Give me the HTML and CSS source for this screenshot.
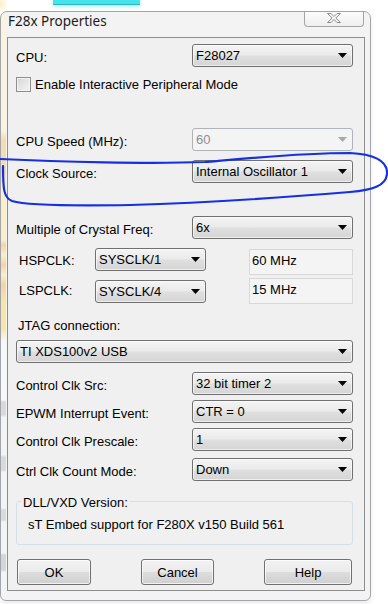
FILE: index.html
```html
<!DOCTYPE html>
<html>
<head>
<meta charset="utf-8">
<title>F28x Properties</title>
<link rel="stylesheet" href="styles.css">
</head>
<body>
<div class="backdrop"><div class="chip"></div></div>
<div class="window">
  <div class="titlebar">
    <span class="title">F28x Properties</span>
    <div class="close">
      <svg width="16" height="12" viewBox="0 0 16 12"><path d="M1.5 1.5h3.5l3 3 3-3h3.5l-4.7 4.5 4.7 4.5h-3.5l-3-3-3 3h-3.5l4.7-4.5z" fill="#f6f6f6" stroke="#8c8c8c" stroke-width="1" stroke-linejoin="round"/></svg>
    </div>
  </div>
  <div class="client">
    <div class="row m6"><span class="lbl">CPU:</span><div class="combo"><span>F28027</span></div></div>
    <div class="check-row m10"><span class="check"></span><span>Enable Interactive Peripheral Mode</span></div>
    <div class="row m36"><span class="lbl">CPU Speed (MHz):</span><div class="combo disabled"><span>60</span></div></div>
    <div class="row m9"><span class="lbl">Clock Source:</span><div class="combo"><span>Internal Oscillator 1</span></div></div>
    <div class="row m33"><span class="lbl">Multiple of Crystal Freq:</span><div class="combo"><span>6x</span></div></div>
    <div class="clk-row m9">
      <span class="lbl clk-lbl">HSPCLK:</span>
      <div class="combo small"><span>SYSCLK/1</span></div>
      <div class="readout">60 MHz</div>
    </div>
    <div class="clk-row m3">
      <span class="lbl clk-lbl">LSPCLK:</span>
      <div class="combo small lower"><span>SYSCLK/4</span></div>
      <div class="readout">15 MHz</div>
    </div>
    <div class="caption m13">JTAG connection:</div>
    <div class="row m7"><div class="combo wide"><span>TI XDS100v2 USB</span></div></div>
    <div class="row m9"><span class="lbl">Control Clk Src:</span><div class="combo"><span>32 bit timer 2</span></div></div>
    <div class="row m5"><span class="lbl">EPWM Interrupt Event:</span><div class="combo"><span>CTR = 0</span></div></div>
    <div class="row m5"><span class="lbl">Control Clk Prescale:</span><div class="combo"><span>1</span></div></div>
    <div class="row m7"><span class="lbl">Ctrl Clk Count Mode:</span><div class="combo"><span>Down</span></div></div>
    <fieldset class="group m11">
      <legend>DLL/VXD Version:</legend>
      <p class="version">sT Embed support for F280X v150 Build 561</p>
    </fieldset>
    <div class="buttons m14">
      <button class="btn ok">OK</button>
      <button class="btn cancel">Cancel</button>
      <button class="btn help">Help</button>
    </div>
  </div>
</div>
<svg class="scribble" width="388" height="604" viewBox="0 0 388 604">
  <path d="M0 159 C60 162 150 164 205 162 C250 158 300 153 350 153 C372 154 388 160 387 174 C386 186 372 190 350 192 C290 197 200 203 130 205 C70 206 25 205 12 201 C4 198 3 190 3 166" fill="none" stroke="#1530e0" stroke-width="2.2" stroke-linecap="round"/>
</svg>
</body>
</html>
```
FILE: styles.css
```css
* { box-sizing: border-box; }
html, body { margin: 0; padding: 0; }
body {
  width: 388px;
  height: 604px;
  overflow: hidden;
  background: #ffffff;
  font-family: "Liberation Sans", Arial, sans-serif;
  font-size: 13px;
  line-height: 15px;
  color: #000;
}
.backdrop {
  height: 11px;
  padding-left: 53px;
  background: radial-gradient(circle at 0 4px, #f8efc4 0, rgba(255, 255, 255, 0) 9px);
}
.chip {
  width: 87px;
  height: 5px;
  background: #47e2ea;
  border-bottom: 1px solid #2ab7c4;
  box-shadow: 0 1px 4px rgba(70, 220, 230, 0.6);
}
.window {
  width: 371px;
  height: 590px;
  border: 1px solid #a2a6aa;
  border-radius: 7px 7px 6px 6px;
  background-color: #f3f3f3;
  background-image: linear-gradient(to bottom,
    #fbf4dc 0, #fbf4dc 118px, #f6dcb0 128px, #f6dcb0 160px, #fbefc8 172px,
    #fbefc8 228px, #f5d2a5 233px, #fbefc8 243px, #f5d2a5 253px, #fbefc8 263px,
    #f5d2a5 273px, #f8e6a6 290px, #f8e6a6 316px, #f8f8f8 330px,
    #f8f8f8 388px, #d9d9d9 390px, #d9d9d9 403px, #f4f4f4 405px,
    #f4f4f4 443px, #d9d9d9 445px, #d9d9d9 458px, #f4f4f4 460px,
    #f4f4f4 496px, #dadada 498px, #dadada 508px, #f4f4f4 510px,
    #f4f4f4 541px, #d6d6d6 543px, #d6d6d6 558px, #f4f4f4 560px);
  background-size: 5px 100%;
  background-repeat: no-repeat;
  padding-bottom: 9px;
  box-shadow: 0 3px 5px rgba(0, 0, 0, 0.08);
}
.titlebar {
  height: 25px;
  display: flex;
  justify-content: space-between;
  align-items: flex-start;
  padding: 0 6px 0 7px;
}
.title {
  font-family: "Noto Sans", sans-serif;
  font-size: 13.5px;
  line-height: 18px;
  color: #1c1c1c;
}
.close {
  width: 60px;
  height: 15px;
  border: 1px solid #a5a5a5;
  border-top: none;
  border-radius: 0 0 4px 4px;
  background: linear-gradient(#fbfbfb, #efefef);
  display: flex;
  justify-content: center;
  align-items: flex-start;
}
.client {
  height: 554px;
  margin: 0 5px 0 6px;
  border: 1px solid #8d8d8d;
  background: #f0f0f0;
  padding: 0 11px 0 8px;
  display: flex;
  flex-direction: column;
}
.m3 { margin-top: 3px; }
.m5 { margin-top: 5px; }
.m6 { margin-top: 6px; }
.m7 { margin-top: 7px; }
.m9 { margin-top: 9px; }
.m10 { margin-top: 10px; }
.m11 { margin-top: 11px; }
.m13 { margin-top: 13px; }
.m14 { margin-top: 14px; }
.m33 { margin-top: 33px; }
.m36 { margin-top: 36px; }

.row { display: flex; align-items: center; height: 23px; }
.lbl { flex: 1; padding-top: 3px; white-space: nowrap; }

.combo {
  width: 161px;
  height: 23px;
  margin-left: auto;
  border: 1px solid #707070;
  border-radius: 3px;
  background: linear-gradient(#f4f4f4, #eaeaea 48%, #dfdfdf 52%, #d5d5d5);
  box-shadow: inset 0 0 0 1px rgba(255, 255, 255, 0.6);
  display: flex;
  align-items: center;
  justify-content: space-between;
  padding: 0 5px 0 3px;
  white-space: nowrap;
}
.combo::after {
  content: "";
  width: 9px;
  height: 5px;
  background: #000;
  clip-path: polygon(0 0, 100% 0, 50% 100%);
}
.combo.disabled {
  border-color: #b0b4b8;
  background: #f4f4f4;
  box-shadow: none;
  color: #8e8e8e;
}
.combo.disabled::after { background: #a8a8a8; }
.combo.wide { width: 337px; }
.combo.small { width: 111px; margin-left: 0; }
.combo.lower { margin-top: 2px; }

.check-row { display: flex; align-items: center; height: 15px; gap: 4px; }
.check {
  width: 15px;
  height: 15px;
  border: 1px solid #8e8f8f;
  background: linear-gradient(135deg, #d6d6d6, #f6f6f6);
  box-shadow: inset 0 0 0 1px #f4f4f4;
}

.clk-row { display: flex; align-items: flex-start; height: 27px; }
.clk-lbl { flex: none; width: 79px; padding-left: 3px; padding-top: 5px; }
.readout {
  width: 104px;
  height: 26px;
  margin-left: auto;
  margin-top: 1px;
  border: 1px solid #d8d8d8;
  background: #f4f4f4;
  padding: 3px 0 0 2px;
}
.clk-row.m3 .readout { margin-top: 0; }

.caption { height: 15px; padding-left: 2px; }

.group {
  margin-left: 0;
  margin-right: 0;
  min-width: 0;
  height: 53px;
  border: 1px solid #d5dfe5;
  border-radius: 3px;
  padding: 0 0 0 5px;
}
.group legend {
  padding: 4px 1px 0 1px;
  margin: 0;
  line-height: 14px;
}
.version { margin: 7px 0 0 0; padding-left: 6px; }

.buttons {
  display: flex;
  justify-content: space-between;
  padding: 0 1px 0 1px;
}
.btn {
  height: 26px;
  border: 1px solid #707070;
  border-radius: 3px;
  background: linear-gradient(#f2f2f2, #ebebeb 48%, #dddddd 52%, #cfcfcf);
  box-shadow: inset 0 0 0 1px rgba(255, 255, 255, 0.7);
  font-family: "Liberation Sans", Arial, sans-serif;
  font-size: 13px;
  color: #000;
  padding: 0;
}
.ok { width: 74px; }
.cancel { width: 73px; }
.help { width: 88px; }

.scribble {
  position: absolute;
  left: 0;
  top: 0;
  pointer-events: none;
}
```
